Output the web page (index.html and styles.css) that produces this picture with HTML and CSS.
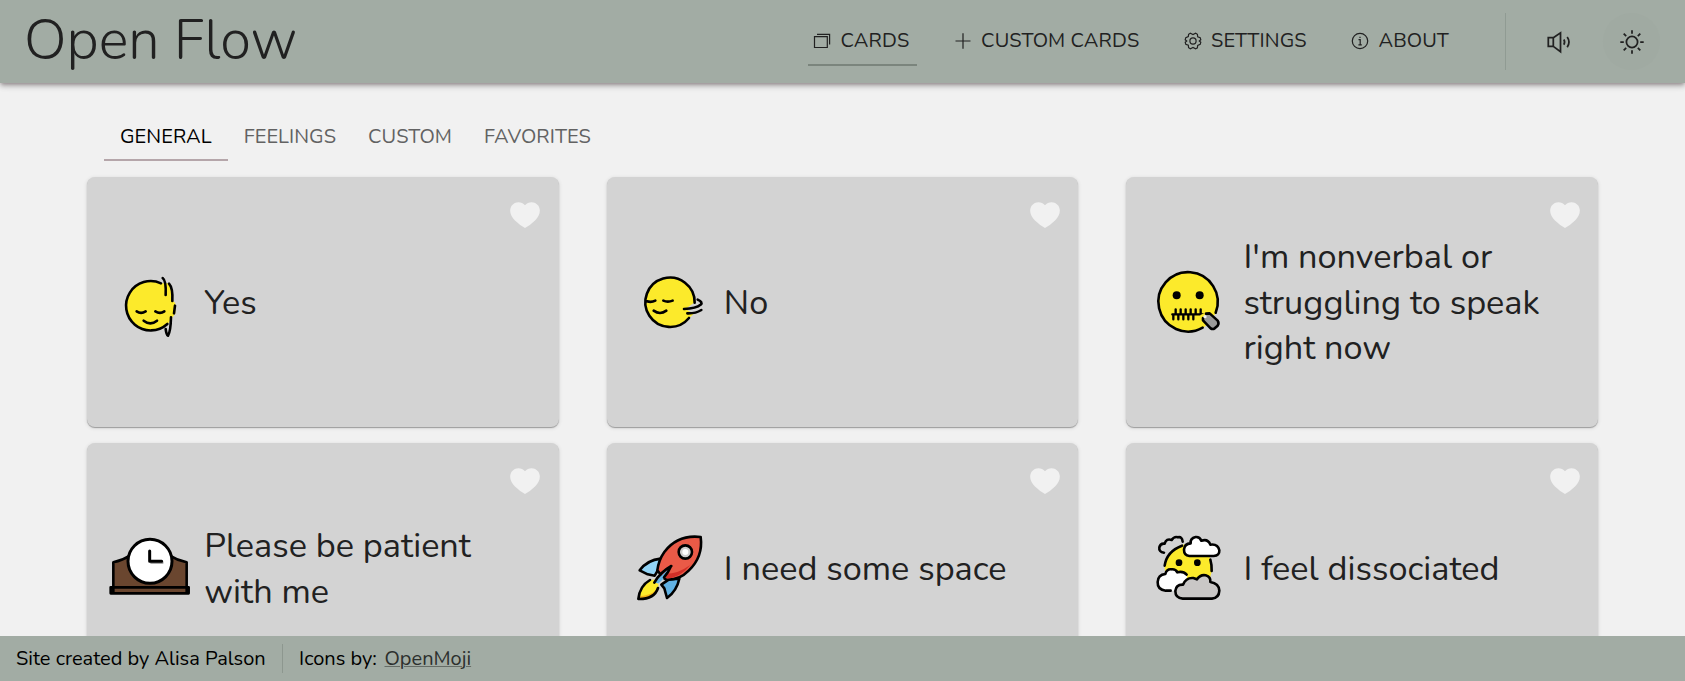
FILE: index.html
```html
<!DOCTYPE html>
<html lang="en">
<head>
<meta charset="utf-8">
<title>Open Flow</title>
<link rel="stylesheet" href="styles.css">
</head>
<body>
<header class="header">
  <h1 class="brand">Open Flow</h1>
  <nav class="nav">
    <a class="nav-item active"><svg class="nav-icon" viewBox="0 0 18 18"><path d="M1.5 4.700h12.800v10.800H1.500zM4 2.400h12.600v10"/></svg><span>CARDS</span></a>
    <a class="nav-item"><svg class="nav-icon" viewBox="0 0 18 18"><path d="M9 1.200v15.600M1.500 9h15"/></svg><span>CUSTOM CARDS</span></a>
    <a class="nav-item"><svg class="nav-icon" viewBox="0 0 18 18"><circle cx="9" cy="9" r="3.100"/><path d="M6.400 1.200l2.600 1.300 2.600-1.300 1.800 1.100.3 2.400 2.500 1 .6 2.100L15.300 9l1.500 1.300-.6 2.100-2.500 1-.3 2.400-1.800 1.100L9 15.500l-2.600 1.300-1.800-1.100-.3-2.400-2.500-1-.6-2.100L2.700 9 1.200 7.700l.6-2.100 2.500-1 .3-2.300z"/></svg><span>SETTINGS</span></a>
    <a class="nav-item"><svg class="nav-icon" viewBox="0 0 18 18"><circle cx="9" cy="9" r="7.700"/><path d="M7.500 7.600H9.200v5M7.400 12.900h3.400M9 4.700v1.400"/></svg><span>ABOUT</span></a>
  </nav>
  <div class="tools">
    <button class="tool"><svg viewBox="0 0 28 28"><path d="M3.300 9.700h5v8.700h-5zM8.300 9.700l7.200-4.900v19l-7.200-5.400M18.800 11.500q1.600 2.600 0 5.200M22.200 9q3.600 5 0 10.200"/></svg></button>
    <button class="tool lit"><svg viewBox="0 0 28 28"><circle cx="14" cy="14" r="5.600"/><path d="M14 2.300v3.500M14 22.200v3.500M2.300 14h3.500M22.200 14h3.500M5.700 5.700l2.500 2.500M19.800 19.800l2.500 2.500M5.700 22.300l2.500-2.500M19.800 8.200l2.500-2.500"/></svg></button>
  </div>
</header>
<main class="main">
  <div class="tabs">
    <a class="tab current">GENERAL</a><a class="tab">FEELINGS</a><a class="tab">CUSTOM</a><a class="tab">FAVORITES</a>
  </div>
  <section class="cards">
    <article class="card">
      <svg class="emoji" viewBox="69 48 279 279">
        <path class="y" d="M245 130A75 75 0 1 0 264 251L286 220V190L276 180 270 130z"/>
        <path d="M243 130A74 74 0 1 0 262 252M248 114Q259 122 257 165M267 131Q279 144 277 183M285 197L282 220M273 232Q272 275 264 287Q259 284 257 267M170 214Q183 223 197 214M226 214Q240 223 253 214M191 242Q211 258 231 242"/>
      </svg>
      <p class="label">Yes</p>
      <svg class="heart" viewBox="0 0 30 26"><path d="M15 3.200C18.500-1 25-.8 28.200 3.500 31.500 8.600 29.500 14 25 18.500Q20.500 23 15 26 9.500 23 5 18.500C.5 14-1.500 8.600 1.800 3.500 5-.8 11.500-1 15 3.200z"/></svg>
    </article>
    <article class="card">
      <svg class="emoji" viewBox="-22 47 279 279">
        <path class="y" d="M193 186A74 74 0 1 0 176 234L190 220 165 206z"/>
        <path d="M193 187A74 74 0 1 0 176 233M50 183Q63 187 75 181M99 181Q112 187 127 181M70 211Q89 225 108 211M202 178Q219 186 211 193Q198 205 161 206M171 219Q195 220 213 209"/>
      </svg>
      <p class="label">No</p>
      <svg class="heart" viewBox="0 0 30 26"><path d="M15 3.200C18.500-1 25-.8 28.200 3.500 31.500 8.600 29.500 14 25 18.500Q20.500 23 15 26 9.500 23 5 18.500C.5 14-1.500 8.600 1.800 3.500 5-.8 11.500-1 15 3.200z"/></svg>
    </article>
    <article class="card">
      <svg class="emoji" viewBox="37 48 279 279">
        <circle class="y n" cx="175" cy="186" r="89"/>
        <path d="M258 218A89 89 0 1 0 219 263"/>
        <circle class="k" cx="141" cy="166" r="12"/><circle class="k" cx="210" cy="166" r="12"/>
        <path class="w7" d="M128 223H220M138 208V223M153 208V223M168 208V223M183 208V223M198 208V223M213 208V223M131 223V238M146 223V238M161 223V238M176 223V238M191 223V238"/>
        <path class="n y" d="M211 226l20-10 9 15-13 10z"/>
        <path class="g" d="M229 221L240 220 264 242Q269 249 264 257L255 265Q249 269 243 265L220 241 220 234"/><circle class="n" fill="#eee" cx="226" cy="230" r="5"/>
      </svg>
      <p class="label">I'm nonverbal or<br>struggling to speak<br>right now</p>
      <svg class="heart" viewBox="0 0 30 26"><path d="M15 3.200C18.500-1 25-.8 28.200 3.500 31.500 8.600 29.500 14 25 18.500Q20.500 23 15 26 9.500 23 5 18.500C.5 14-1.500 8.600 1.800 3.500 5-.8 11.500-1 15 3.200z"/></svg>
    </article>
    <article class="card">
      <svg class="emoji" viewBox="69 66 279 279">
        <path class="b" d="M100 262V187Q128 181 151 166H268Q292 181 320 187V262zM92 262H326V280H92zM100 262V278M320 262V278"/>
        <circle fill="#fff" stroke-width="9" cx="210" cy="184" r="66"/>
        <path stroke="#aaa" d="M214 188H247"/><path stroke-width="9" d="M209 153V184H245"/>
      </svg>
      <p class="label">Please be patient<br>with me</p>
      <svg class="heart" viewBox="0 0 30 26"><path d="M15 3.200C18.500-1 25-.8 28.200 3.500 31.500 8.600 29.500 14 25 18.500Q20.500 23 15 26 9.500 23 5 18.500C.5 14-1.500 8.600 1.800 3.500 5-.8 11.500-1 15 3.200z"/></svg>
    </article>
    <article class="card">
      <svg class="emoji" viewBox="9 36 279 279">
        <path fill="#92d3f5" d="M122 146Q82 150 59 181L83 193 104 197 116 177z"/>
        <path fill="#61b2e4" d="M178 206Q170 243 141 264L133 235 124 224 147 208z"/>
        <path fill="#ea5a47" d="M242 81Q173 73 133 126Q116 150 112 181L128 202 139 209Q178 211 206 182Q250 140 242 81z"/>
        <path class="n" fill="#d22f27" d="M120 190Q165 198 212 164 178 205 139 205z"/>
        <path class="n" fill="#fcea2b" d="M102 208Q59 222 55 267Q109 262 116 224z"/>
        <path class="n" fill="#f1b31c" d="M56 259Q88 258 109 240 99 268 56 267z"/>
        <path class="n" fill="#61b2e4" d="M154 169L101 218 116 220Q140 200 154 169z"/>
        <path d="M90 210Q59 228 55 267Q103 268 114 234M154 168Q119 188 103 218M153 169Q145 188 132 202"/>
        <circle fill="#d0cfce" cx="196" cy="126" r="20"/><circle class="n" fill="#fff" cx="196" cy="126" r="9"/>
      </svg>
      <p class="label">I need some space</p>
      <svg class="heart" viewBox="0 0 30 26"><path d="M15 3.200C18.500-1 25-.8 28.200 3.500 31.500 8.600 29.500 14 25 18.500Q20.500 23 15 26 9.500 23 5 18.500C.5 14-1.500 8.600 1.800 3.500 5-.8 11.500-1 15 3.200z"/></svg>
    </article>
    <article class="card">
      <svg class="emoji" viewBox="37 36 279 279">
        <circle class="y n" cx="176" cy="173" r="71"/>
        <path d="M105 167Q111 124 157 107M242 149Q247 166 246 183M103 128Q87 126 89 112Q92 99 105 101Q110 84 126 90Q134 78 145 82Q157 79 159 95"/>
        <circle class="k" cx="148" cy="158" r="10"/><circle class="k" cx="203" cy="158" r="10"/>
        <path fill="#fff" d="M179 138Q163 136 163 119Q164 101 183 100Q181 85 198 81Q210 80 215 92Q235 85 242 104Q265 101 269 121Q270 137 252 138z"/>
        <path class="n" fill="#fff" d="M122 242H140L172 203 170 189 147 184 124 178 108 188 87 198 84 225 98 239z"/>
        <path d="M123 242H108Q83 239 84 216Q85 194 107 192Q111 176 126 178Q138 177 143 187Q160 182 171 194"/>
        <path fill="#c9c7c6" d="M159 266Q137 264 137 243Q139 223 160 224Q169 202 191 204Q198 206 202 208Q212 193 228 196Q244 201 242 216Q268 220 269 242Q268 264 247 266z"/>
      </svg>
      <p class="label">I feel dissociated</p>
      <svg class="heart" viewBox="0 0 30 26"><path d="M15 3.200C18.500-1 25-.8 28.200 3.500 31.500 8.600 29.500 14 25 18.500Q20.500 23 15 26 9.500 23 5 18.500C.5 14-1.500 8.600 1.800 3.500 5-.8 11.500-1 15 3.200z"/></svg>
    </article>
  </section>
</main>
<footer class="footer">
  <span class="credit">Site created by Alisa Palson</span>
  <span class="icons-by">Icons by:</span>
  <a class="link">OpenMoji</a>
</footer>
</body>
</html>
```

FILE: styles.css
```css
* { box-sizing: border-box; }
body {
  margin: 0;
  height: 681px;
  overflow: hidden;
  display: flex;
  flex-direction: column;
  background: #f1f1f1;
  color: #212121;
  font-family: Nunito, Lato, sans-serif;
}
.header {
  flex: none;
  height: 83px;
  display: flex;
  align-items: center;
  padding: 0 25px 0 24px;
  background: #a2aca4;
  box-shadow: 0 2px 4px -1px rgba(33, 0, 11, .35), 0 4px 5px rgba(0, 0, 0, .14), 0 1px 10px rgba(0, 0, 0, .08);
  z-index: 1;
}
.brand { margin: 0; padding-bottom: 2px; font-size: 56px; font-weight: 300; line-height: 76px; white-space: nowrap; }
.nav { display: flex; gap: 31.3px; margin-left: auto; }
.nav-item {
  display: flex;
  align-items: center;
  gap: 9.5px;
  height: 49px;
  padding: 0 8px 0 5px;
  border-bottom: 2px solid transparent;
  font-size: 20px;
  letter-spacing: .1px;
  white-space: nowrap;
}
.nav-item.active { border-color: #7b857d; }
.nav-icon { width: 18px; height: 18px; fill: none; stroke: #212121; stroke-width: 1.2; }
.tools { display: flex; gap: 16px; margin-left: 48px; padding-left: 24px; border-left: 1px solid #909b93; }
.tool { width: 57px; height: 57px; padding: 0; border: 0; border-radius: 50%; background: none; display: grid; place-items: center; }
.tool.lit { background: #a0aaa2; }
.tool svg { width: 28px; height: 28px; fill: none; stroke: #212121; stroke-width: 1.75; }
.main { flex: 1; min-height: 0; overflow: hidden; padding: 31px 87px 0; }
.tabs { display: flex; height: 47px; margin: 0 0 16px 17px; }
.tab { height: 47px; padding: 0 16px; border-bottom: 2px solid transparent; font-size: 20px; line-height: 45px; letter-spacing: .06px; color: #626262; white-space: nowrap; }
.tab.current { color: #000; border-color: #b5a6aa; }
.cards { display: grid; grid-template-columns: repeat(3, 1fr); grid-auto-rows: 250px; gap: 16px 48px; }
.card {
  position: relative;
  display: flex;
  align-items: center;
  gap: 8.2px;
  padding: 0 16px;
  border-radius: 8px;
  background: #d3d3d3;
  box-shadow: 0 1px 1px rgba(0, 0, 0, .3), 0 1px 4px rgba(0, 0, 0, .12);
}
.emoji { flex: none; width: 93px; height: 93px; fill: none; stroke: #000; stroke-width: 7.8; stroke-linecap: round; stroke-linejoin: round; }
.y { fill: #fcea2b; stroke: none; }
.n { stroke: none; }
.k { fill: #000; stroke: none; }
.g { fill: #9b9b9a; }
.b { fill: #6a462f; }
.w7 { stroke-width: 7; }
.label { margin: 0; padding-top: 1px; font-size: 34.27px; line-height: 45.5px; white-space: nowrap; }
.heart { position: absolute; top: 25px; right: 18.2px; width: 30px; height: 26px; fill: #f1f1f1; }
.footer {
  flex: none;
  height: 45px;
  display: flex;
  align-items: center;
  padding-left: 16px;
  background: #a2aca4;
  color: #000;
  font-size: 20px;
  white-space: nowrap;
  z-index: 1;
}
.credit { width: 266px; }
.icons-by { border-left: 1px solid #8d978f; padding-left: 16px; line-height: 29px; width: 102.5px; }
.link { color: #2c2f2d; text-decoration: underline 1px #656c66; }
```
